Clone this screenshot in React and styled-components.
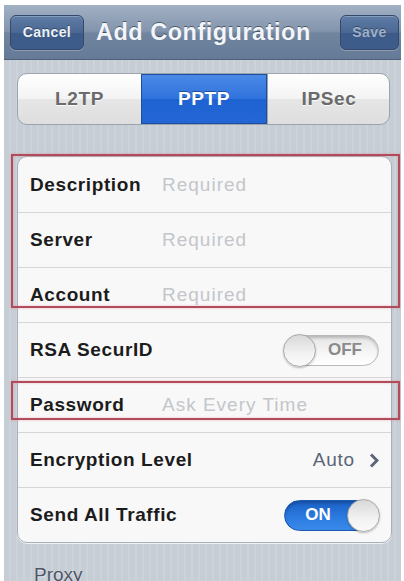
import styled, { createGlobalStyle } from "styled-components";

const GlobalStyle = createGlobalStyle`
  html, body {
    margin: 0;
    padding: 0;
    background: #ffffff;
    overflow: hidden;
  }
  body {
    font-family: "Liberation Sans", Arial, sans-serif;
  }
`;

const Frame = styled.div`
  width: 404px;
  height: 581px;
  padding: 5px 3px 0 4px;
  box-sizing: border-box;
  background: #fff;
`;

const Screen = styled.div`
  height: 100%;
  display: flex;
  flex-direction: column;
  overflow: hidden;
  background: repeating-linear-gradient(
    90deg,
    #c6cdd5 0px,
    #c6cdd5 5px,
    #ccd3da 5px,
    #ccd3da 7px
  );
`;

const NavBar = styled.div`
  flex: none;
  height: 55px;
  display: flex;
  align-items: center;
  padding: 0 2px 0 6px;
  background: linear-gradient(#a2b0c3 0%, #8395ad 48%, #71859f 52%, #647a97 100%);
  border-bottom: 1px solid #4e5f77;
  box-sizing: border-box;
`;

const NavButton = styled.div`
  flex: none;
  height: 35px;
  width: ${(p) => p.$w}px;
  display: flex;
  align-items: center;
  justify-content: center;
  border-radius: 6px;
  border: 1px solid #34496b;
  box-sizing: border-box;
  background: linear-gradient(#5f7ca6 0%, #4a6893 50%, #3c5b89 51%, #3d5c8a 100%);
  box-shadow: inset 0 1px 0 rgba(255, 255, 255, 0.25), 0 1px 0 rgba(255, 255, 255, 0.25);
  color: ${(p) => (p.$disabled ? "#9fb1c9" : "#eef2f7")};
  font-size: 14px;
  font-weight: bold;
  letter-spacing: 0.4px;
  text-shadow: 0 -1px 0 rgba(0, 0, 0, 0.35);
`;

const Title = styled.div`
  flex: 1;
  padding-left: 12px;
  color: #f2f5f9;
  font-size: 23.5px;
  font-weight: bold;
  letter-spacing: 0.5px;
  text-shadow: 0 -1px 0 rgba(0, 0, 0, 0.45);
`;

const Content = styled.div`
  flex: none;
  padding: 13px 11px 0 13px;
  display: flex;
  flex-direction: column;
`;

const Segmented = styled.div`
  flex: none;
  display: flex;
  height: 52px;
  border-radius: 10px;
  border: 1px solid #9ba3ad;
  box-sizing: border-box;
  overflow: hidden;
  background: linear-gradient(#ffffff 0%, #f3f3f3 50%, #e6e6e6 51%, #dedede 100%);
`;

const Segment = styled.div`
  flex: 0 0 ${(p) => p.$w}px;
  display: flex;
  align-items: center;
  justify-content: center;
  font-size: 19px;
  font-weight: bold;
  letter-spacing: 0.6px;
  color: ${(p) => (p.$active ? "#ffffff" : "#6b6b6b")};
  text-shadow: ${(p) =>
    p.$active ? "0 -1px 0 rgba(0,0,0,0.35)" : "0 1px 0 rgba(255,255,255,0.9)"};
  background: ${(p) =>
    p.$active
      ? "linear-gradient(#4b8ae6 0%, #2f72dc 50%, #1f62d2 51%, #2466d4 100%)"
      : "transparent"};
  border-left: ${(p) => (p.$divider ? "1px solid #9ba3ad" : "none")};
  box-shadow: ${(p) => (p.$active ? "inset 0 0 0 1px #1d4d9e" : "none")};
`;

const Card = styled.div`
  flex: none;
  margin-top: 31px;
  background: #f8f8f8;
  border: 1px solid #a9afb7;
  border-radius: 10px;
  box-shadow: 0 1px 0 rgba(255, 255, 255, 0.7);
  width: 373px;
`;

const Highlight = styled.div`
  position: relative;

  &::after {
    content: "";
    position: absolute;
    top: ${(p) => p.$top}px;
    bottom: ${(p) => p.$bottom}px;
    left: -7px;
    right: -9px;
    border: 2px solid #b14c5c;
    box-shadow: 0 0 2px rgba(220, 120, 130, 0.6), inset 0 0 2px rgba(220, 120, 130, 0.6);
    pointer-events: none;
  }
`;

const Row = styled.div`
  height: 55px;
  display: flex;
  align-items: center;
  padding: 0 12px 0 12px;
  box-sizing: border-box;
  border-top: ${(p) => (p.$first ? "none" : "1px solid #d6d6d6")};
`;

const Label = styled.div`
  width: ${(p) => (p.$wide ? "auto" : "132px")};
  flex: ${(p) => (p.$wide ? "1" : "none")};
  font-size: 19px;
  font-weight: bold;
  letter-spacing: 0.6px;
  color: #1c1c1c;
`;

const Placeholder = styled.div`
  font-size: 19px;
  letter-spacing: 1px;
  color: #c3c6ca;
`;

const Detail = styled.div`
  display: flex;
  align-items: center;
  gap: 14px;
  font-size: 19px;
  letter-spacing: 0.8px;
  color: #5a6577;
`;

const Switch = styled.div`
  width: 95px;
  height: 31px;
  border-radius: 16px;
  box-sizing: border-box;
  display: flex;
  align-items: center;
  flex-direction: ${(p) => (p.$on ? "row" : "row-reverse")};
  border: 1px solid ${(p) => (p.$on ? "#1b58b2" : "#b9b9b9")};
  background: ${(p) =>
    p.$on
      ? "linear-gradient(#1a5fc4 0%, #2b7ae0 55%, #3a8aea 100%)"
      : "linear-gradient(#e4e4e4 0%, #f7f7f7 60%, #ffffff 100%)"};
  box-shadow: inset 0 2px 3px rgba(0, 0, 0, 0.2);
`;

const SwitchText = styled.div`
  flex: 1;
  text-align: center;
  font-size: 17px;
  font-weight: bold;
  color: ${(p) => (p.$on ? "#ffffff" : "#8b8b8b")};
  padding-${(p) => (p.$on ? "left" : "right")}: 2px;
`;

const Knob = styled.div`
  width: 33px;
  height: 33px;
  margin: -2px;
  border-radius: 50%;
  box-sizing: border-box;
  border: 1px solid #a8a8a8;
  background: linear-gradient(#d8d8d8 0%, #f2f2f2 60%, #fafafa 100%);
  box-shadow: 0 1px 2px rgba(0, 0, 0, 0.25);
`;

const SectionTitle = styled.div`
  margin: 21px 0 0 17px;
  font-size: 19px;
  color: #4e5666;
  text-shadow: 0 1px 0 rgba(255, 255, 255, 0.7);
`;

const Chevron = () => (
  <svg width="10" height="15" viewBox="0 0 10 15">
    <path d="M2 1.5 L8 7.5 L2 13.5" fill="none" stroke="#5a6577" strokeWidth="3" />
  </svg>
);

export default function App() {
  return (
    <>
      <GlobalStyle />
      <Frame>
        <Screen>
          <NavBar>
            <NavButton $w={74}>Cancel</NavButton>
            <Title>Add Configuration</Title>
            <NavButton $w={59} $disabled>
              Save
            </NavButton>
          </NavBar>
          <Content>
            <Segmented>
              <Segment $w={123}>L2TP</Segment>
              <Segment $w={126} $active>
                PPTP
              </Segment>
              <Segment $w={122} $divider>
                IPSec
              </Segment>
            </Segmented>
            <Card>
              <Highlight $top={-3} $bottom={14}>
                <Row $first>
                  <Label>Description</Label>
                  <Placeholder>Required</Placeholder>
                </Row>
                <Row>
                  <Label>Server</Label>
                  <Placeholder>Required</Placeholder>
                </Row>
                <Row>
                  <Label>Account</Label>
                  <Placeholder>Required</Placeholder>
                </Row>
              </Highlight>
              <Row>
                <Label $wide>RSA SecurID</Label>
                <Switch>
                  <SwitchText>OFF</SwitchText>
                  <Knob />
                </Switch>
              </Row>
              <Highlight $top={4} $bottom={12}>
                <Row>
                  <Label>Password</Label>
                  <Placeholder>Ask Every Time</Placeholder>
                </Row>
              </Highlight>
              <Row>
                <Label $wide>Encryption Level</Label>
                <Detail>
                  Auto
                  <Chevron />
                </Detail>
              </Row>
              <Row>
                <Label $wide>Send All Traffic</Label>
                <Switch $on>
                  <SwitchText $on>ON</SwitchText>
                  <Knob />
                </Switch>
              </Row>
            </Card>
            <SectionTitle>Proxy</SectionTitle>
          </Content>
        </Screen>
      </Frame>
    </>
  );
}
